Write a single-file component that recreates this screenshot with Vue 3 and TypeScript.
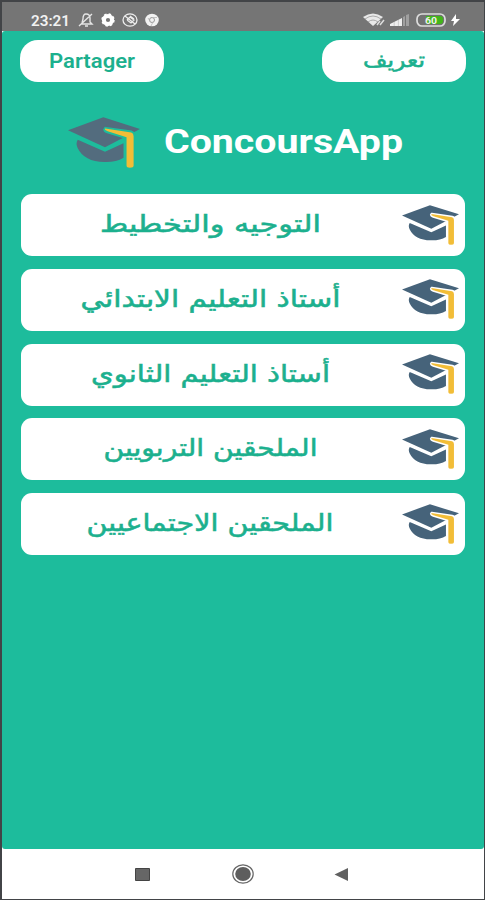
<script setup lang="ts">
import { defineComponent, h } from 'vue'

interface Category {
  label: string
  center: number
  width: number
}

const categories: Category[] = [
  { label: 'التوجيه والتخطيط', center: 189.5, width: 221 },
  { label: 'أستاذ التعليم الابتدائي', center: 189.5, width: 260 },
  { label: 'أستاذ التعليم الثانوي', center: 189.5, width: 239 },
  { label: 'الملحقين التربويين', center: 189.5, width: 214 },
  { label: 'الملحقين الاجتماعيين', center: 189, width: 247 },
]

const GraduationCap = defineComponent({
  render: () =>
    h('svg', { viewBox: '0 0 214 154', preserveAspectRatio: 'none', 'aria-hidden': 'true' }, [
      h('path', { fill: 'currentColor', d: 'M0 40 105 1 214 36 110 91Z' }),
      h('path', { fill: 'currentColor', d: 'M29 69 110 105 165 79V123Q143 137 108 136 48 134 29 94Q22 80 29 69Z' }),
      h('path', { class: 'cap-gap', d: 'M112 36 188 47Q195 49 195 58V147Q195 153 184 153 174 153 174 147V61L118 43Q108 40 112 36Z' }),
      h('path', { fill: '#f2bd37', d: 'M110 35 188 47Q195 49 195 58V147Q195 153 184 153 174 153 174 147V61L118 43Q108 40 110 35Z' }),
    ]),
})
</script>

<template>
  <div class="phone">
    <header class="status">
      <div class="status-left">
        <svg class="clock" viewBox="0 0 40 16"><text x="0" y="13.5" textLength="39" lengthAdjust="spacingAndGlyphs">23:21</text></svg>
        <svg class="bell" viewBox="0 0 16 14" fill="none" stroke="#e5e5e5" stroke-width="1.4">
          <path d="M3 11h11l-2-2V5C12 2 10 1 8 1S5 3 5 6L4 10M1 13 14 1M7 13h3" />
        </svg>
        <svg class="dot" viewBox="0 0 14 14">
          <circle cx="7" cy="7" r="4.1" fill="none" stroke="#fff" stroke-width="4" />
          <circle cx="7" cy="7" r="5.8" fill="none" stroke="#fff" stroke-width="1.8" stroke-dasharray="2.4 2.15" />
        </svg>
        <svg class="round" viewBox="0 0 16 14" fill="none" stroke="#eee" stroke-width="1.3">
          <ellipse cx="8" cy="7" rx="7" ry="6.2" />
          <path d="m3 3 10 8M5 7l4 3 3-3-4-3-3 3M8 3l4 3" />
        </svg>
        <svg class="dot" viewBox="0 0 14 14">
          <ellipse cx="7" cy="7" rx="6.8" ry="6.3" fill="#f2f2f2" />
          <circle cx="7" cy="7" r="2.5" fill="none" stroke="#999" stroke-width="1" />
          <path d="M7 4.5h5M5 8 3 5m5 4-2 4" stroke="#b5b5b5" stroke-width=".8" />
        </svg>
      </div>
      <div class="status-right">
        <svg class="wifi" viewBox="0 0 22 14" fill="none">
          <path d="M0 4Q10-3 20 4L10 13Z" fill="#e9e9e9" />
          <path d="M2 6Q10 0 18 6M5 9q5-4 10 0" stroke="#999" stroke-width=".8" />
          <path d="m14 12 3-4m0 4 4-5" stroke="#ddd" stroke-width="1.5" />
        </svg>
        <svg class="signal" viewBox="0 0 20 12">
          <path d="M0 12v-2l12-6v8Z" fill="#eee" />
          <path d="M13 12V3l2-1v10Zm3 0V1l3-1v12Z" fill="#a0a0a0" />
          <path d="M4.2 8v4M8.4 6v6" stroke="#b5b5b5" stroke-width=".6" />
        </svg>
        <svg class="battery" viewBox="0 0 31 14">
          <rect x="1" y="1" width="28" height="12" rx="5" fill="#727272" stroke="#ddd" stroke-width="1.7" />
          <path d="M10 3h14q3 0 3 3v2q0 3-3 3H10Z" fill="#42b51a" />
          <text x="9" y="10.5" textLength="12" lengthAdjust="spacingAndGlyphs">60</text>
        </svg>
        <svg class="bolt" viewBox="0 0 9 12"><path d="M5 0 0 7h3L2 12 9 5H5Z" fill="#fff" /></svg>
      </div>
    </header>

    <main class="screen">
      <div class="actions">
        <button class="pill">
          <svg viewBox="0 0 144 42"><text x="29" y="27.5" textLength="86" lengthAdjust="spacingAndGlyphs">Partager</text></svg>
        </button>
        <button class="pill">
          <svg viewBox="0 0 144 42"><text class="arabic" x="72" y="26.5" text-anchor="middle" textLength="62" lengthAdjust="spacingAndGlyphs">تعريف</text></svg>
        </button>
      </div>
      <div class="brand">
        <GraduationCap class="brand-cap" />
        <svg class="brand-name" viewBox="0 0 242 50"><text x="-1" y="35" textLength="239" lengthAdjust="spacingAndGlyphs">ConcoursApp</text></svg>
      </div>
      <nav class="list">
        <button v-for="item in categories" :key="item.label" class="card">
          <svg class="card-label" viewBox="0 0 381 62">
            <text class="arabic" :x="item.center" y="37.6" text-anchor="middle" :textLength="item.width" lengthAdjust="spacingAndGlyphs">{{ item.label }}</text>
          </svg>
          <GraduationCap class="card-cap" />
        </button>
      </nav>
    </main>

    <footer class="navbar">
      <svg viewBox="0 0 15 13"><path d="M.5.5h14v12H.5Z" fill="#666" stroke="#444" /></svg>
      <svg class="home" viewBox="0 0 22 20">
        <ellipse cx="11" cy="10" rx="10.2" ry="9.2" fill="none" stroke="#666" stroke-width="1.2" />
        <ellipse cx="11" cy="10" rx="7.8" ry="7" fill="#5e5e5e" />
      </svg>
      <svg viewBox="0 0 15 14"><path d="M0 7 14.5 0v14Z" fill="#606060" /></svg>
    </footer>
  </div>
</template>

<style>
body { margin: 0; background: #fff; }
.cap-gap { fill: none; stroke: var(--gap); stroke-width: 12px; }
</style>

<style scoped>
.phone {
  box-sizing: border-box;
  width: 485px;
  height: 900px;
  display: flex;
  flex-direction: column;
  border: solid #424447;
  border-width: 2px 1px 1px 2px;
  background: #fff;
  overflow: hidden;
  font-family: Roboto, "Liberation Sans", sans-serif;
}
svg { display: block; overflow: visible; flex: none; }
button { border: 0; padding: 0; background: #fff; color: #1cb08e; display: flex; }
.status {
  height: 29px;
  flex: none;
  box-sizing: border-box;
  padding: 7px 24px 0 29px;
  display: flex;
  justify-content: space-between;
  background: #757575;
}
.status-left, .status-right { display: flex; align-items: center; height: 22px; }
.status-left { gap: 7px; }
.clock { width: 40px; height: 16px; font-size: 14px; font-weight: 600; fill: #f2f2f2; }
.bell { width: 16px; height: 14px; }
.dot { width: 14px; height: 14px; }
.round { width: 16px; height: 14px; }
.wifi { width: 22px; height: 14px; margin-right: 5px; }
.signal { width: 20px; height: 12px; margin-right: 6px; }
.battery { width: 31px; height: 14px; margin-right: 4px; font-size: 9px; font-weight: 700; fill: #eee; }
.bolt { width: 9px; height: 12px; }
.screen {
  height: 818px;
  flex: none;
  box-sizing: border-box;
  padding: 8.5px 18px 0;
  background: #1dbc9c;
  border-radius: 3px;
}
.actions { display: flex; justify-content: space-between; }
.pill { width: 144px; height: 42.5px; border-radius: 18px; }
.pill svg { width: 144px; height: 42px; font: 600 20px Roboto, sans-serif; fill: currentColor; }
.brand { height: 112px; display: flex; align-items: center; padding-left: 48px; }
.brand-cap { --gap: #1dbc9c; width: 72px; height: 51px; margin-top: 8px; color: #536c7e; }
.brand-name { width: 242px; height: 50px; margin: 9px 0 0 25px; font-size: 34px; font-weight: 700; fill: #fff; }
.list { display: flex; flex-direction: column; gap: 12.8px; padding-left: 1px; }
.card { width: 444px; height: 62px; border-radius: 11px; align-items: center; }
.card-label { width: 381px; height: 62px; fill: currentColor; }
.card .arabic { font: 24px "DejaVu Sans", sans-serif; }
.pill .arabic { font: 20px "DejaVu Sans", sans-serif; }
.arabic { direction: rtl; stroke: currentColor; stroke-width: .55px; }
.card-cap { --gap: #fff; width: 57px; height: 40px; margin-bottom: 1px; color: #46637a; }
.navbar { flex: 1; display: flex; align-items: center; padding-left: 133px; }
.navbar svg { width: 15px; height: 13px; }
.navbar .home { width: 22px; height: 20px; margin: 0 80px 0 82px; }
</style>
